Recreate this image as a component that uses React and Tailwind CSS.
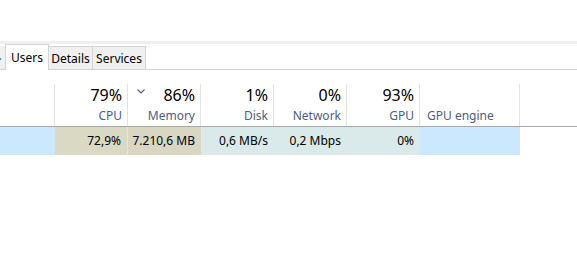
const cols = [
  { key: 'cpu', pct: '79%', label: 'CPU', value: '72,9%', w: 'w-[73px]', bg: 'bg-[#dad9c4]' },
  { key: 'mem', pct: '86%', label: 'Memory', value: '7.210,6 MB', w: 'w-[73px]', bg: 'bg-[#d9d7c4]', sort: true },
  { key: 'disk', pct: '1%', label: 'Disk', value: '0,6 MB/s', w: 'w-[73px]', bg: 'bg-[#dae9ea]' },
  { key: 'net', pct: '0%', label: 'Network', value: '0,2 Mbps', w: 'w-[73px]', bg: 'bg-[#dae9ea]' },
  { key: 'gpu', pct: '93%', label: 'GPU', value: '0%', w: 'w-[73px]', bg: 'bg-[#dae9ea]' },
]

export default function App() {
  return (
    <div className="w-[577px] h-[273px] bg-white overflow-hidden font-['Segoe_UI','Noto_Sans',sans-serif]">
      <div className="h-[41px]" />
      <div className="h-[3px] bg-[#f0f0f0]" />

      <div className="h-[26px] flex items-end border-b border-[#d4d4d4]">
        <div className="h-[23px] w-[5px] bg-[#f0f0f0] flex items-center">
          <div className="w-[1px] h-[2px] mt-[2px] bg-[#3c9ae6]" />
        </div>
        <div className="relative z-10 mb-[-1px] h-[26px] w-[44px] flex items-center justify-center bg-white border border-b-0 border-[#d4d4d4] text-[12px] text-black">
          Users
        </div>
        <div className="h-[23px] w-[44px] pt-[2px] flex items-center justify-center bg-[#f0f0f0] border-r border-t border-[#d4d4d4] text-[12px]">Details</div>
        <div className="h-[23px] w-[53px] pt-[2px] flex items-center justify-center bg-[#f0f0f0] border-r border-t border-[#d4d4d4] text-[12px]">Services</div>
      </div>

      <div className="h-[57px] flex items-end border-b border-[#a8a8a8]">
        <div className="w-[55px] h-[42px] border-r border-[#e3e3e3]" />
        {cols.map(c => (
          <div key={c.key} className={`${c.w} h-[42px] border-r border-[#e3e3e3] relative flex flex-col items-end pr-[5px]`}>
            {c.sort && (
              <svg className="absolute left-[9px] top-[5px]" width="8" height="5" viewBox="0 0 8 5">
                <path d="M0.5 0.5 L4 4 L7.5 0.5" fill="none" stroke="#4d6082" strokeWidth="1.1" />
              </svg>
            )}
            <div className="text-[16px] leading-[20px] mt-[1px] text-black">{c.pct}</div>
            <div className="text-[12px] leading-[16px] mt-[3px] text-[#4d6082]">{c.label}</div>
          </div>
        ))}
        <div className="w-[100px] h-[42px] border-r border-[#e3e3e3] flex items-end pl-[7px]">
          <div className="text-[12px] leading-[16px] mb-[2px] text-[#4d6082]">GPU engine</div>
        </div>
      </div>

      <div className="h-[28px] flex text-[12px] text-black">
        <div className="w-[55px] bg-[#cce8ff]" />
        {cols.map((c, i) => (
          <div key={c.key} className={`${c.w} ${c.bg} ${i === 0 ? 'border-r border-[#e6e6da]' : ''} flex items-center justify-end pr-[6px]`}>
            {c.value}
          </div>
        ))}
        <div className="w-[100px] bg-[#cce8ff]" />
      </div>
    </div>
  )
}
